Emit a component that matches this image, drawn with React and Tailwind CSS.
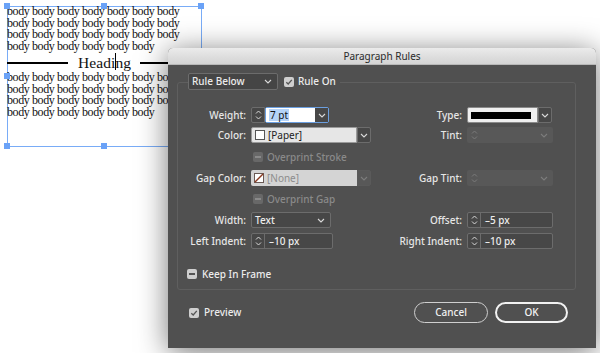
import React from "react";

const ui = { fontFamily: '"Noto Sans", "DejaVu Sans", sans-serif' };
const serif = { fontFamily: '"Liberation Serif", "Times New Roman", serif' };

function ChevronDown({ className = "" }) {
  return (
    <svg width="8" height="5" viewBox="0 0 8 5" className={className}>
      <path d="M1 1 L4 4 L7 1" fill="none" stroke="currentColor" strokeWidth="1.1" />
    </svg>
  );
}

function StepArrows({ dim }) {
  const c = dim ? "text-[#7a7a7a]" : "text-[#d8d8d8]";
  return (
    <div className={`flex flex-col items-center justify-center gap-[2px] ${c}`}>
      <svg width="7" height="4" viewBox="0 0 7 4">
        <path d="M1 3.5 L3.5 1 L6 3.5" fill="none" stroke="currentColor" strokeWidth="1" />
      </svg>
      <svg width="7" height="4" viewBox="0 0 7 4">
        <path d="M1 0.5 L3.5 3 L6 0.5" fill="none" stroke="currentColor" strokeWidth="1" />
      </svg>
    </div>
  );
}

function Label({ w, children, dim }) {
  return (
    <div
      className={`shrink-0 text-right pr-[5px] text-[10px] leading-none ${dim ? "text-[#8a8a8a]" : "text-[#e6e6e6]"}`}
      style={{ width: w }}
    >
      {children}
    </div>
  );
}

function NumField({ w, value }) {
  return (
    <div
      className="flex h-[16px] rounded-[2px] border border-[#6c6c6c] bg-[#474747]"
      style={{ width: w }}
    >
      <div className="flex w-[13px] items-center justify-center border-r border-[#6c6c6c]">
        <StepArrows />
      </div>
      <div className="flex items-center pl-[4px] text-[10px] text-[#ececec]">{value}</div>
    </div>
  );
}

function DisabledField({ w }) {
  return (
    <div
      className="flex h-[16px] items-center justify-between rounded-[2px] bg-[#585858] pr-[5px]"
      style={{ width: w }}
    >
      <div className="flex w-[14px] items-center justify-center">
        <StepArrows dim />
      </div>
      <ChevronDown className="text-[#7c7c7c]" />
    </div>
  );
}

function ChevBtn({ dim }) {
  return (
    <div
      className={`flex h-[16px] w-[14px] items-center justify-center rounded-r-[2px] border ${
        dim ? "border-[#5a5a5a] bg-[#585858] text-[#7c7c7c]" : "border-[#6c6c6c] bg-[#474747] text-[#d8d8d8]"
      }`}
    >
      <ChevronDown />
    </div>
  );
}

function CheckBox({ state, dim }) {
  const bg = dim ? "bg-[#686868]" : "bg-[#cfcfcf]";
  const fg = dim ? "#8a8a8a" : "#555";
  return (
    <div className={`flex h-[10px] w-[10px] items-center justify-center rounded-[2px] ${bg}`}>
      {state === "check" ? (
        <svg width="8" height="8" viewBox="0 0 8 8">
          <path d="M1.3 4.2 L3.2 6 L6.8 1.8" fill="none" stroke={fg} strokeWidth="1.3" />
        </svg>
      ) : (
        <div className="h-[2px] w-[6px]" style={{ background: fg }} />
      )}
    </div>
  );
}

const bodyLine7 = "body body body body body body body";
const bodyLine6 = "body body body body body body";

function Handle({ x, y }) {
  return (
    <div
      className="absolute h-[6px] w-[6px] bg-[#6aa2f7]"
      style={{ left: x - 3, top: y - 3 }}
    />
  );
}

export default function App() {
  return (
    <div className="relative h-[353px] w-[600px] overflow-hidden bg-white">
      {/* Document canvas */}
      <div className="absolute left-[7px] top-[6px] h-[141px] w-[195px] border border-[#79acf7]" />
      <div
        className="absolute left-[7px] top-[6px] w-[260px] text-[12px] tracking-[-0.4px] text-[#111]"
        style={serif}
      >
        <div className="leading-[11.7px]">
          <div className="whitespace-nowrap">{bodyLine7}</div>
          <div className="whitespace-nowrap">{bodyLine7}</div>
          <div className="whitespace-nowrap">{bodyLine7}</div>
          <div className="whitespace-nowrap">{bodyLine6}</div>
        </div>
        <div className="flex h-[19px] items-center pt-[1px]">
          <div className="h-[2px] w-[61px] bg-black" />
          <div className="ml-[10px] text-[15.5px] leading-none tracking-[0.1px]">Heading</div>
          <div className="ml-[9px] h-[2px] w-[120px] bg-black" />
        </div>
        <div className="leading-[11.7px]">
          <div className="whitespace-nowrap">{bodyLine7}</div>
          <div className="whitespace-nowrap">{bodyLine7}</div>
          <div className="whitespace-nowrap">{bodyLine7}</div>
          <div className="whitespace-nowrap">{bodyLine6}</div>
        </div>
      </div>
      <div className="absolute left-[115px] top-[53px] h-[17px] w-[1px] bg-black" />
      <Handle x={7} y={6} />
      <Handle x={104} y={6} />
      <Handle x={201} y={6} />
      <Handle x={7} y={76} />
      <Handle x={7} y={146} />
      <Handle x={104} y={146} />

      {/* Dialog */}
      <div
        className="absolute left-[168px] top-[48px] flex h-[300px] w-[428px] flex-col overflow-hidden rounded-t-[5px] bg-[#505050] font-medium shadow-[0_4px_30px_rgba(0,0,0,0.55)]"
        style={ui}
      >
        <div className="flex h-[17px] shrink-0 items-center justify-center border-b border-[#b8b8b8] bg-gradient-to-b from-[#ebebeb] to-[#d3d3d3] text-[10px] font-normal text-[#2a2a2a]">
          Paragraph Rules
        </div>

        {/* group box */}
        <div className="ml-[9px] mr-[20px] mt-[17px] flex flex-col rounded-[3px] border border-[#5f5f5f] pb-[9px]">
          {/* header row */}
          <div className="-mt-[10px] ml-[10px] flex w-fit items-center bg-[#505050] pr-[4px]">
            <div className="flex h-[17px] w-[90px] items-center justify-between rounded-[2px] border border-[#6c6c6c] bg-[#454545] pl-[3px] pr-[5px] text-[10px] text-[#ececec]">
              <span>Rule Below</span>
              <ChevronDown className="text-[#d8d8d8]" />
            </div>
            <div className="ml-[6px]">
              <CheckBox state="check" />
            </div>
            <span className="ml-[4px] text-[10px] text-[#ececec]">Rule On</span>
          </div>

          {/* Weight / Type */}
          <div className="mt-[17px] flex h-[16px] items-center">
            <div className="flex w-[203px] items-center">
              <Label w={73}>Weight:</Label>
              <div className="flex h-[16px] w-[14px] items-center justify-center rounded-l-[2px] border border-[#6c6c6c] bg-[#474747]">
                <StepArrows />
              </div>
              <div className="flex h-[16px] items-center rounded-[2px] border border-[#6b9fe0]">
                <div className="flex h-[14px] w-[49px] items-center bg-white pl-[3px]">
                  <span className="bg-[#b5d3f8] px-[1px] text-[10px] font-normal leading-[12px] text-[#111]">7 pt</span>
                </div>
                <div className="flex h-[14px] w-[13px] items-center justify-center bg-[#474747] text-[#d8d8d8]">
                  <ChevronDown />
                </div>
              </div>
            </div>
            <div className="flex items-center">
              <Label w={86}>Type:</Label>
              <div className="flex h-[16px] w-[71px] items-center rounded-l-[2px] border border-[#8a8a8a] bg-[#f0f0f0] pl-[3px]">
                <div className="h-[7px] w-[60px] bg-black" />
              </div>
              <ChevBtn />
            </div>
          </div>

          {/* Color / Tint */}
          <div className="mt-[4px] flex h-[16px] items-center">
            <div className="flex w-[203px] items-center">
              <Label w={73}>Color:</Label>
              <div className="flex h-[16px] w-[106px] items-center rounded-l-[2px] border border-[#9a9a9a] bg-[#e6e6e6] pl-[3px]">
                <div className="h-[10px] w-[10px] border border-[#555] bg-white" />
                <span className="ml-[3px] text-[10px] font-normal text-[#222]">[Paper]</span>
              </div>
              <ChevBtn />
            </div>
            <div className="flex items-center">
              <Label w={86}>Tint:</Label>
              <DisabledField w={86} />
            </div>
          </div>

          {/* Overprint Stroke */}
          <div className="mt-[8px] flex h-[12px] items-center pl-[75px]">
            <CheckBox state="dash" dim />
            <span className="ml-[4px] text-[10px] text-[#8a8a8a]">Overprint Stroke</span>
          </div>

          {/* Gap Color / Gap Tint */}
          <div className="mt-[7px] flex h-[16px] items-center">
            <div className="flex w-[203px] items-center">
              <Label w={73}>Gap Color:</Label>
              <div className="flex h-[16px] w-[106px] items-center rounded-l-[2px] bg-[#d4d4d4] pl-[3px]">
                <svg width="10" height="10" viewBox="0 0 10 10">
                  <rect x="0.5" y="0.5" width="9" height="9" fill="#fff" stroke="#6a5a55" />
                  <path d="M1 9 L9 1" stroke="#8a3b22" strokeWidth="1.4" />
                </svg>
                <span className="ml-[3px] text-[10px] font-normal text-[#8c8c8c]">[None]</span>
              </div>
              <ChevBtn dim />
            </div>
            <div className="flex items-center">
              <Label w={86}>Gap Tint:</Label>
              <DisabledField w={86} />
            </div>
          </div>

          {/* Overprint Gap */}
          <div className="mt-[7px] flex h-[12px] items-center pl-[75px]">
            <CheckBox state="dash" dim />
            <span className="ml-[4px] text-[10px] text-[#8a8a8a]">Overprint Gap</span>
          </div>

          {/* Width / Offset */}
          <div className="mt-[7px] flex h-[16px] items-center">
            <div className="flex w-[203px] items-center">
              <Label w={73}>Width:</Label>
              <div className="flex h-[16px] w-[80px] items-center justify-between rounded-[2px] border border-[#6c6c6c] bg-[#474747] pl-[3px] pr-[5px] text-[10px] text-[#ececec]">
                <span>Text</span>
                <ChevronDown className="text-[#d8d8d8]" />
              </div>
            </div>
            <div className="flex items-center">
              <Label w={86}>Offset:</Label>
              <NumField w={86} value="–5 px" />
            </div>
          </div>

          {/* Left / Right indent */}
          <div className="mt-[5px] flex h-[16px] items-center">
            <div className="flex w-[203px] items-center">
              <Label w={73}>Left Indent:</Label>
              <NumField w={82} value="–10 px" />
            </div>
            <div className="flex items-center">
              <Label w={86}>Right Indent:</Label>
              <NumField w={86} value="–10 px" />
            </div>
          </div>

          {/* Keep In Frame */}
          <div className="mt-[19px] flex h-[12px] items-center pl-[9px]">
            <CheckBox state="dash" />
            <span className="ml-[5px] text-[10px] text-[#ececec]">Keep In Frame</span>
          </div>
        </div>

        {/* bottom row */}
        <div className="mt-[12px] flex h-[21px] items-center pl-[21px] pr-[28px]">
          <CheckBox state="check" />
          <span className="ml-[5px] text-[10px] text-[#ececec]">Preview</span>
          <div className="ml-auto flex gap-[7px]">
            <div className="flex h-[21px] w-[74px] items-center justify-center rounded-full border border-[#cfcfcf] text-[10px] text-[#f0f0f0]">
              Cancel
            </div>
            <div className="flex h-[21px] w-[73px] items-center justify-center rounded-full border-2 border-[#f2f2f2] text-[10px] text-[#f4f4f4]">
              OK
            </div>
          </div>
        </div>
      </div>
    </div>
  );
}
